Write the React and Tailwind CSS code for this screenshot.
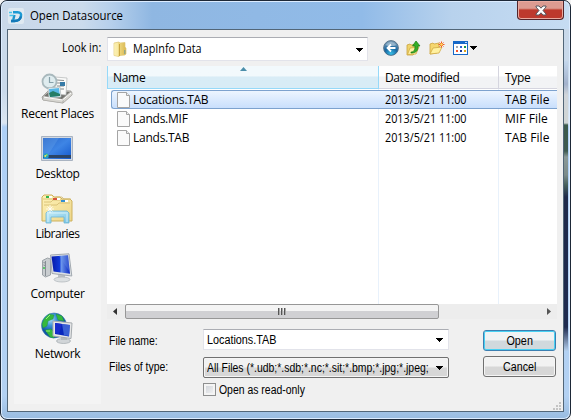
import React from "react";

const ui = "font-['Open_Sans','Noto_Sans',sans-serif] text-[12px] whitespace-nowrap";
const ms = "font-['Liberation_Sans',Arial,sans-serif] text-[12px] whitespace-nowrap";
const narrow = "inline-block origin-left scale-x-[0.87]";
const slim = "inline-block origin-left scale-x-[0.9]";

function Caret({ className = "" }) {
  return (
    <svg width="7" height="4" viewBox="0 0 7 4" className={`shrink-0 ${className}`} shapeRendering="crispEdges">
      <path d="M0 0h7v1H6v1H5v1H4v1H3V3H2V2H1V1H0z" fill="#000" />
    </svg>
  );
}

function AppLogo() {
  return (
    <svg width="16" height="16" viewBox="0 0 16 16" className="rounded-[2px] bg-[#dfe9f1]">
      <path d="M5 4.2h4.5c3.2 0 4 1.800 3.400 4.300C12.200 11.700 10 13 6.500 13H3" fill="none" stroke="#1b9ad4" strokeWidth="2.500" />
      <path d="M3 13h3.500c3.500 0 5.700-1.300 6.400-4.500" fill="none" stroke="#1579b8" strokeWidth="2.300" />
      <path d="M6.500 7L5.200 12" stroke="#1b93cc" strokeWidth="2.400" />
      <path d="M1 4.500h3M1.500 7.500h4" stroke="#45c3ea" strokeWidth="1.500" />
    </svg>
  );
}

function Folder() {
  return (
    <svg width="15" height="17" viewBox="0 0 15 17">
      <defs>
        <linearGradient id="fold" x2="1">
          <stop stopColor="#f9edaa" />
          <stop offset=".5" stopColor="#edd57b" />
          <stop offset="1" stopColor="#d9b750" />
        </linearGradient>
      </defs>
      <path d="M1 2l5-1 1 1 5-.5V6l1 1v6l-1 1-5 .5-1 1-5-1z" fill="url(#fold)" stroke="#dfc775" strokeWidth=".7" />
      <path d="M2 2.5v12M4 2v13" stroke="#fff5bd" />
      <path d="M6.5 3v12" stroke="#c8a440" />
      <path d="M11.8 9v4" stroke="#5a94a8" strokeWidth=".8" />
    </svg>
  );
}

function BackIcon() {
  return (
    <svg width="16" height="16" viewBox="0 0 16 16">
      <defs>
        <radialGradient id="back" cy=".9" r=".9">
          <stop stopColor="#38bfe8" />
          <stop offset=".5" stopColor="#1765a0" />
          <stop offset="1" stopColor="#8ba8bd" />
        </radialGradient>
      </defs>
      <circle cx="8" cy="8" r="7.4" fill="url(#back)" stroke="#44627c" strokeWidth=".8" />
      <path d="M2.500 5Q8-1 13.500 5L11 6H5z" fill="#b8cbd9" opacity=".65" />
      <path d="M12.500 8H4.500M8 4.500L4.500 8 8 11.500" fill="none" stroke="#fff" strokeWidth="1.800" />
    </svg>
  );
}

function UpIcon() {
  return (
    <svg width="15" height="16" viewBox="0 0 15 16">
      <path d="M1 5l3-1 1 1 5-1v8l-3 3H1z" fill="#efd36b" stroke="#c9a23c" strokeWidth=".8" />
      <path d="M1.5 14.5L4 8l9-1-3 7z" fill="#fff0a1" stroke="#d1ab43" strokeWidth=".8" />
      <path d="M5 12c3 0 4-2 4-6H6.5L10 1l4 5h-2c0 5-2 7-7 7z" fill="#35ae27" stroke="#187b16" strokeWidth=".7" />
    </svg>
  );
}

function NewFolderIcon() {
  return (
    <svg width="16" height="16" viewBox="0 0 16 16">
      <path d="M1 14V4l3-1 1 1 5-1v5l-2 5z" fill="#f5d66e" stroke="#cda33e" strokeWidth=".8" />
      <path d="M1 14l3-6 9-1-3 6z" fill="#fff1a0" stroke="#d1aa44" strokeWidth=".8" />
      <path d="M12.5 1.500v6M9.500 4.5h6M10.500 2.500l4 4M14.500 2.500l-4 4" stroke="#ef5924" strokeWidth="1" />
      <circle cx="12.5" cy="4.5" r="1.3" fill="#ffdf65" />
    </svg>
  );
}

function ViewIcon() {
  return (
    <svg width="15" height="14" viewBox="0 0 15 14" shapeRendering="crispEdges">
      <path d="M0 0h15v14H0z" fill="#1668c8" />
      <path d="M1 3h13v10H1z" fill="#fff" />
      <path d="M12 1h2v1h-2z" fill="#b7d9ff" />
      <path d="M3 5h2v2H3z" fill="#a3a8b0" />
      <path d="M7 5h2v2H7z" fill="#2a62d4" />
      <path d="M11 5h2v2h-2z" fill="#169344" />
      <path d="M3 9h2v2H3z" fill="#f3542c" />
      <path d="M7 9h2v2H7z" fill="#173b9a" />
      <path d="M11 9h2v2h-2z" fill="#dda51b" />
    </svg>
  );
}

function RecentIcon() {
  return (
    <svg width="32" height="32" viewBox="0 0 32 32">
      <path d="M1 24l7-7 22 1 1 4-9 8L2 27z" fill="#c5c4bf" stroke="#8d8d89" strokeWidth=".7" />
      <path d="M3 23l6-5 20 1-8 7z" fill="#73736f" />
      <path d="M14 4l12 1-1 17-12-1z" fill="#fbfbfa" stroke="#b1b4b4" strokeWidth=".7" />
      <path d="M16 7l7 .5M16 10h3M16 13h7M16 16h7" stroke="#858b8d" />
      <path d="M19 9h5v4h-5z" fill="#377ba7" />
      <circle cx="8.500" cy="8.500" r="7" fill="#dfecef" stroke="#a9b9bd" strokeWidth="1.8" />
      <path d="M8.500 4v5.500h4" fill="none" stroke="#86a0a9" strokeWidth="1.2" />
      <path d="M7 15l12-1 1 10-12 1z" fill="#f7fbfc" stroke="#a8b4b8" strokeWidth=".7" />
      <path d="M8 16l10-1 1 8-10 1z" fill="#58b7e6" />
      <path d="M8 20l4-2 7 3v2l-10 1z" fill="#247d67" />
      <path d="M2 24l20 3v3L2 27zM22 27l9-8v3l-9 8z" fill="#d8d7d2" stroke="#a6a5a0" strokeWidth=".5" />
      <path d="M3 24.2l18.5 2.8 8.5-7" fill="none" stroke="#fff" />
    </svg>
  );
}

function DesktopIcon() {
  return (
    <svg width="32" height="25" viewBox="0 0 32 25">
      <defs>
        <linearGradient id="desk" x2="1" y2="1">
          <stop stopColor="#2864c7" />
          <stop offset=".5" stopColor="#3e85e5" />
          <stop offset="1" stopColor="#1559cc" />
        </linearGradient>
      </defs>
      <path d="M.5.5h31v24H.5z" fill="#d3d9e1" stroke="#a9b3c1" />
      <path d="M2 2h28v21H2z" fill="url(#desk)" />
      <path d="M2 2h16L7 19H2z" fill="#7db6f3" opacity=".25" />
      <path d="M2 19h28v3H2z" fill="#2c4566" />
      <circle cx="5" cy="20" r="2.8" fill="#249fc2" />
      <path d="M3.5 19h1.5v2H3.5z" fill="#eadf5b" />
      <path d="M5 18h1.5v2H5z" fill="#71d57a" />
    </svg>
  );
}

function LibrariesIcon() {
  return (
    <svg width="32" height="32" viewBox="0 0 32 32">
      <defs>
        <linearGradient id="lib" y2="1">
          <stop stopColor="#fff2b6" />
          <stop offset="1" stopColor="#edd68a" />
        </linearGradient>
        <linearGradient id="glass" y2="1">
          <stop stopColor="#c5ecf8" />
          <stop offset="1" stopColor="#78c4e5" />
        </linearGradient>
      </defs>
      <path d="M1 28V4l2-2h8l2 2h6l2 2h8l2 2v20z" fill="url(#lib)" stroke="#cdb15d" />
      <path d="M2 6h11l2-2h6l2 2h7M3 9h7l2-2h15M3 12h13l2-2h11" fill="none" stroke="#d3ba70" strokeWidth=".8" />
      <path d="M5 3h6v2H5z" fill="#fff" />
      <path d="M5 3h3v2H5z" fill="#32b64b" />
      <path d="M12 5h7v2h-7z" fill="#fff" />
      <path d="M12 5h4v2h-4z" fill="#d8533b" />
      <path d="M20 7h7v2h-7z" fill="#fff" />
      <path d="M20 7h4v2h-4z" fill="#328fd1" />
      <path d="M5 30V20l2-2h19l2 2v10h-5v-6H10v6z" fill="url(#glass)" stroke="#6db5d3" strokeWidth=".8" />
      <path d="M6 20h21M7 21v8M26 21v8" stroke="#e2f7fc" opacity=".8" />
      <path d="M9 12v8M5 16h8M6.500 13.500l5 5M11.500 13.500l-5 5" stroke="#fff" strokeWidth=".8" />
    </svg>
  );
}

function ComputerIcon() {
  return (
    <svg width="32" height="32" viewBox="0 0 32 32">
      <defs>
        <linearGradient id="screen" x2="1">
          <stop stopColor="#0619a8" />
          <stop offset=".45" stopColor="#103bdb" />
          <stop offset=".52" stopColor="#6f99ec" />
          <stop offset="1" stopColor="#0825c1" />
        </linearGradient>
      </defs>
      <path d="M1.500 7.500l5-2.500 3 1v16l-5 2-3-2z" fill="#c9cdd0" stroke="#8b9399" strokeWidth=".8" />
      <path d="M4.500 8v15M2.500 9.500l1.500.5M2.500 12l1.500.5" stroke="#878e94" />
      <circle cx="3" cy="15" r="1" fill="#37c64b" />
      <path d="M17 21l7 1v4h-7z" fill="#bfc3c7" />
      <ellipse cx="21" cy="26.500" rx="8" ry="2.5" fill="#dce0e2" stroke="#a5abb0" strokeWidth=".6" />
      <path d="M9.500 2L28 .8 30.800 23 11 20.500z" fill="#dce0e4" stroke="#a2a9b0" />
      <path d="M10.5 3.5L27 2.200l2 18.500-16.500-2.200z" fill="url(#screen)" />
      <path d="M18 3l9-.8 2 17z" fill="#6b91e7" opacity=".35" />
    </svg>
  );
}

function NetworkIcon() {
  return (
    <svg width="32" height="33" viewBox="0 0 32 33">
      <defs>
        <radialGradient id="globe" cx=".35" cy=".25">
          <stop stopColor="#b5e5fa" />
          <stop offset=".5" stopColor="#3d93d8" />
          <stop offset="1" stopColor="#1156a7" />
        </radialGradient>
      </defs>
      <circle cx="13" cy="13.500" r="12.5" fill="url(#globe)" stroke="#3673a9" strokeWidth=".6" />
      <path d="M3 7l5-5 5 1-1 4-5 2-1 5-4 2-1-4zM15 2l6 2 2 5-6-1zM4 18l6-1 4 4-1 5-4-1z" fill="#36b83d" stroke="#168d43" strokeWidth=".4" />
      <path d="M5 7l4-4M5 19h4" stroke="#9be97c" />
      <ellipse cx="22.500" cy="29" rx="7" ry="2.500" fill="#d1d5d8" stroke="#959da3" strokeWidth=".6" />
      <path d="M20 24h6v4h-6z" fill="#b5b9bc" />
      <path d="M12 9l19 2-1 15.500-18-2.500z" fill="#e5e6e7" stroke="#a6abaf" />
      <path d="M14 11l15 2-1 11.5L14 22z" fill="#0826bd" />
      <path d="M21 12l8 1-1 11-5-.8z" fill="#5a86e2" opacity=".6" />
      <path d="M14 11l7 1-3 10-4-1z" fill="#172ccc" />
    </svg>
  );
}

const places = [
  ["Recent Places", RecentIcon, "tracking-[-0.28px]"],
  ["Desktop", DesktopIcon, "tracking-[-0.3px]"],
  ["Libraries", LibrariesIcon, "tracking-[-0.5px]"],
  ["Computer", ComputerIcon, "tracking-[-0.32px]"],
  ["Network", NetworkIcon, "tracking-[-0.35px]"],
];

function Places() {
  return (
    <nav className="flex h-[338px] w-[87px] shrink-0 flex-col bg-[#f4f4f4] pt-[7px]">
      {places.map(([name, Icon, tracking]) => (
        <div key={name} className="flex h-[60px] shrink-0 flex-col items-center">
          <div className="flex h-[31px] items-center pr-[2px]"><Icon /></div>
          <span className={`${ui} ${tracking} mt-px leading-[17px]`}>{name}</span>
        </div>
      ))}
    </nav>
  );
}

function FileIcon() {
  return (
    <svg width="13" height="16" viewBox="0 0 13 16" className="shrink-0">
      <path d="M.5.5h9l3 3v12H.5z" fill="#fafafa" stroke="#a5a5a5" />
      <path d="M9.5.5v3h3" fill="#eee" stroke="#a5a5a5" />
    </svg>
  );
}

const files = [
  ["Locations.TAB", "2013/5/21 11:00", "TAB File"],
  ["Lands.MIF", "2013/5/21 11:00", "MIF File"],
  ["Lands.TAB", "2013/5/21 11:00", "TAB File"],
];

function FileList() {
  return (
    <section className="flex h-[253px] w-[450px] flex-col bg-white">
      <div className={`${ui} flex h-[23px] shrink-0 leading-[24px]`}>
        <div className="relative w-[272px] border-x border-b border-[#96d9f9] bg-linear-to-b from-[#f2f9fc] from-45% to-[#d8ecf6] to-50% pl-[5px] tracking-[-0.3px]">
          Name
          <svg width="7" height="4" viewBox="0 0 7 4" className="absolute top-[1px] left-[132px]">
            <path d="M0 4L3.5 0 7 4z" fill="#4b8eaa" />
          </svg>
        </div>
        <div className="w-[120px] border-r border-b border-[#d5d5df] bg-linear-to-b from-white from-45% to-[#f2f3f5] to-50% pl-[6px] tracking-[-0.38px]">Date modified</div>
        <div className="flex-1 border-b border-[#d5d5df] bg-linear-to-b from-white from-45% to-[#f2f3f5] to-50% pl-[6px] tracking-[-0.3px]">Type</div>
      </div>
      <div className="flex h-[215px] shrink-0 flex-col bg-[linear-gradient(90deg,transparent_271px,#e8f1fb_271px,#e8f1fb_272px,transparent_272px,transparent_391px,#e8f1fb_391px,#e8f1fb_392px,transparent_392px)] pt-px pl-1">
        {files.map(([name, date, type], i) => (
          <div
            key={name}
            className={`${ui} flex h-[19px] shrink-0 items-center border-y leading-[17px] ${
              i === 0 ? "rounded-l-[3px] border-l border-[#7da2ce] bg-linear-to-b from-[#edf5ff] to-[#c9dffc]" : "border-l border-transparent"
            }`}
          >
            <div className="flex w-[268px] items-center gap-[3px] pl-[5px] tracking-[-0.25px]">
              <FileIcon />
              <span>{name}</span>
            </div>
            <div className="w-[120px] pl-[5px]"><span className={slim}>{date}</span></div>
            <span className="pl-[5px] tracking-[0.05px]">{type}</span>
          </div>
        ))}
      </div>
      <div className="flex h-[15px] items-center justify-between bg-[#ededed] pr-[6px] pl-[6px]">
        <svg width="4" height="7" viewBox="0 0 4 7"><path d="M4 0v7L0 3.5z" fill="#333" /></svg>
        <div className="mr-auto ml-2 flex h-[15px] w-[314px] items-center justify-center gap-px rounded-[2px] border border-[#979797] bg-linear-to-b from-[#f4f4f4] from-45% to-[#d0d0d3] to-50%">
          <i className="h-[7px] w-[2px] border-l border-[#555] bg-[#aaa]" />
          <i className="h-[7px] w-[2px] border-l border-[#555] bg-[#aaa]" />
          <i className="h-[7px] w-[2px] border-l border-[#555] bg-[#aaa]" />
        </div>
        <svg width="4" height="7" viewBox="0 0 4 7"><path d="M0 0v7l4-3.5z" fill="#555" /></svg>
      </div>
    </section>
  );
}

const grey = "bg-linear-to-b from-[#f2f2f2] from-45% to-[#d7d7d7] to-55% shadow-[inset_0_0_0_1px_#f5f5f5]";

function Controls() {
  return (
    <section className="flex h-[85px] justify-between pr-[1px] text-black">
      <div className={`${ms} flex flex-col pt-[10px]`}>
        <div className="flex h-[21px]">
          <label className="w-[96px] pl-[2px] leading-[24px]"><span className={narrow}>File name:</span></label>
          <div className="flex w-[246px] items-center justify-between border border-[#e2e3ea] border-t-[#abadb3] bg-white pt-px pr-[5px] pl-[3px]">
            <span className={slim}>Locations.TAB</span><Caret />
          </div>
        </div>
        <div className="mt-[7px] flex h-[21px]">
          <label className="w-[96px] pl-[2px] leading-[21px]"><span className={narrow}>Files of type:</span></label>
          <div className={`flex w-[246px] items-center rounded-[2px] border border-[#707070] pt-px pr-[5px] pl-[3px] ${grey}`}>
            <div className="w-[229px] shrink-0"><span className={narrow}>All Files (*.udb;*.sdb;*.nc;*.sit;*.bmp;*.jpg;*.jpeg;</span></div>
            <Caret />
          </div>
        </div>
        <div className="mt-[5px] ml-[96px] flex h-[13px] items-center gap-[3px]">
          <span className="size-[13px] border border-[#8e8f8f] bg-linear-to-br from-[#cbcfd5] to-[#f7f7f7] shadow-[inset_0_0_0_2px_#f4f4f4]" />
          <span className={`${narrow} pt-px`}>Open as read-only</span>
        </div>
      </div>
      <div className={`${ms} flex w-[73px] flex-col gap-[5px] pt-[11px]`}>
        <button className="h-[21px] rounded-[3px] border border-[#3c7fb1] bg-linear-to-b from-[#f0f3f4] from-45% to-[#d1d9dd] to-55% shadow-[inset_0_0_0_1px_#48d1f3]"><span className="inline-block scale-x-[0.9]">Open</span></button>
        <button className={`h-[21px] rounded-[3px] border border-[#707070] ${grey}`}><span className="inline-block scale-x-[0.89]">Cancel</span></button>
      </div>
    </section>
  );
}

export default function App() {
  return (
    <div className="h-[420px] w-[571px] overflow-hidden bg-[#f4f4f4]">
      <main className="relative flex h-[420px] w-[571px] flex-col rounded-[7px] border border-[#1d2837] bg-[linear-gradient(#c9d9ea_0,#c9d9ea_90px,#dbe6f1_122px,#aed0f6_126px,#b3d1f2_395px,#98bbe0_100%)] px-[6px] pb-[7px] text-black shadow-[inset_0_0_0_1px_#dcecff]">
        <header className="-mx-[5px] flex h-[28px] shrink-0 items-start justify-between rounded-t-[6px] border-t border-[#dcecff] bg-[linear-gradient(90deg,#c9d8e9_0,#cbdbec_80px,#b5cfeb_110px,#8fb7e2_150px,#91bbe8_360px,#b8d2ed_450px,#c6dcf2_100%)] pl-[6px]">
          <div className="flex h-[27px] items-center gap-[6px]">
            <AppLogo />
            <span className={`${ui} inline-block origin-left scale-x-[0.95]`}>Open Datasource</span>
          </div>
          <div className="mr-[5px] -mt-px flex h-[19px] w-[47px] items-center justify-center rounded-b-[4px] border border-t-0 border-[#52252b] bg-linear-to-b from-[#dc9b91] from-40% to-[#bd392d] to-50% shadow-[inset_0_0_0_1px_#e9aaa0]">
            <svg width="12" height="11" viewBox="0 0 12 11">
              <path d="M1 1h3l2 2.200L8 1h3v1L8 5.500 11 9v1H8L6 7.800 4 10H1V9l3-3.500L1 2z" fill="#fff" stroke="#59575e" />
            </svg>
          </div>
        </header>
        <div className="flex h-[384px] w-[557px] flex-col border border-[#526678] bg-[#f0f0f0] pl-[6px]">
          <div className="flex h-[36px] shrink-0 items-start pt-[7px]">
            <label className={`${ui} w-[93px] pl-[48px] leading-[21px]`}><span className={slim}>Look in:</span></label>
            <div className={`${ui} flex h-[24px] w-[261px] items-center border border-[#e2e3ea] border-t-[#abadb3] bg-white pr-[4px] pl-[5px]`}>
              <Folder />
              <span className={`${slim} ml-[5px]`}>MapInfo Data</span>
              <Caret className="mt-[2px] ml-auto" />
            </div>
            <div className="ml-[15px] flex h-[22px] items-center gap-[7px]">
              <BackIcon />
              <UpIcon />
              <div className="ml-px"><NewFolderIcon /></div>
              <div className="ml-px flex items-center gap-[2px]"><ViewIcon /><Caret /></div>
            </div>
          </div>
          <div className="flex gap-[6px]">
            <Places />
            <div className="flex flex-col"><FileList /><Controls /></div>
          </div>
        </div>
        <div className="absolute top-[60px] right-[2px] h-[290px] w-[4px] bg-[linear-gradient(#c4d7ec_0,#a3b2cc_23px,#d0d5da_34px,#d0d5d4_62px,#3c5a4b_64px,#3f5a50_90px,#8c9a98_96px,#7c8b8a_114px,#47605c_124px,#1f2a4a_136px,#1f2b4f_266px,#b5d0ed_290px)]" />
        <svg width="9" height="9" viewBox="0 0 9 9" className="absolute right-[9px] bottom-[8px]">
          <path d="M7 0h2v2H7zM4 3h2v2H4zM7 3h2v2H7zM1 6h2v2H1zM4 6h2v2H4zM7 6h2v2H7z" fill="#c4c4c4" />
        </svg>
      </main>
    </div>
  );
}
